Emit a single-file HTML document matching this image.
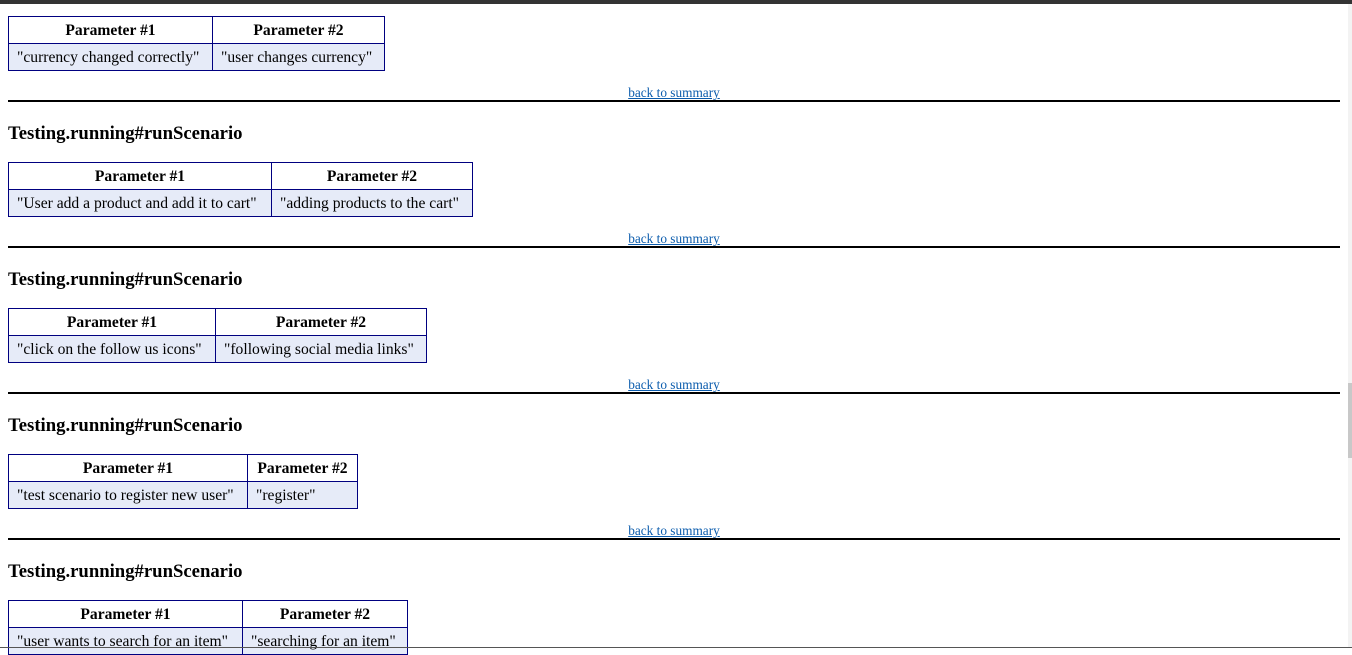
<!DOCTYPE html>
<html><head><meta charset="utf-8"><style>
html,body{margin:0;padding:0;width:1352px;height:648px;overflow:hidden;background:#fff;font-family:"Liberation Serif",serif;color:#000}
.top{position:absolute;left:0;top:0;width:1352px;height:4px;background:#333}
.bot{position:absolute;left:0;top:647px;width:1352px;height:1px;background:#555;z-index:2}
.sb{position:absolute;left:1348px;top:4px;width:4px;height:643px;background:#f3f3f3}
.th{position:absolute;left:1348px;top:383px;width:4px;height:75px;background:#c8c8c8}
table{position:absolute;left:8px;border-collapse:collapse;font-size:15.6px;table-layout:fixed}
th,td{border:1px solid #000080;height:26px;padding:1px 8px 0;text-align:center;white-space:nowrap;line-height:25px;box-sizing:border-box}
td{background:#e6ebf8;text-align:left}
th{font-weight:bold}
.lnk{position:absolute;left:0;width:1348px;text-align:center;font-size:13.3px;color:#0b5cad;text-decoration:underline;line-height:14px}
.hr{position:absolute;left:8px;width:1332px;height:2px;background:#000}
h3{position:absolute;left:8px;margin:0;font-size:18.7px;line-height:20px;font-weight:bold}
</style></head><body>
<div class="top"></div>
<table style="top:16px;width:377px"><tr><th style="width:204px">Parameter #1</th><th>Parameter #2</th></tr><tr><td>"currency changed correctly"</td><td>"user changes currency"</td></tr></table>
<div class="lnk" style="top:86px">back to summary</div><div class="hr" style="top:100px"></div>
<h3 style="top:124px">Testing.running#runScenario</h3>
<table style="top:162px;width:465px"><tr><th style="width:263px">Parameter #1</th><th>Parameter #2</th></tr><tr><td>"User add a product and add it to cart"</td><td>"adding products to the cart"</td></tr></table>
<div class="lnk" style="top:232px">back to summary</div><div class="hr" style="top:246px"></div>
<h3 style="top:270px">Testing.running#runScenario</h3>
<table style="top:308px;width:419px"><tr><th style="width:207px">Parameter #1</th><th>Parameter #2</th></tr><tr><td>"click on the follow us icons"</td><td>"following social media links"</td></tr></table>
<div class="lnk" style="top:378px">back to summary</div><div class="hr" style="top:392px"></div>
<h3 style="top:416px">Testing.running#runScenario</h3>
<table style="top:454px;width:350px"><tr><th style="width:239px">Parameter #1</th><th>Parameter #2</th></tr><tr><td>"test scenario to register new user"</td><td>"register"</td></tr></table>
<div class="lnk" style="top:524px">back to summary</div><div class="hr" style="top:538px"></div>
<h3 style="top:562px">Testing.running#runScenario</h3>
<table style="top:600px;width:400px"><tr><th style="width:234px">Parameter #1</th><th>Parameter #2</th></tr><tr><td>"user wants to search for an item"</td><td>"searching for an item"</td></tr></table>
<div class="sb"></div><div class="th"></div>
<div class="bot"></div>
</body></html>
